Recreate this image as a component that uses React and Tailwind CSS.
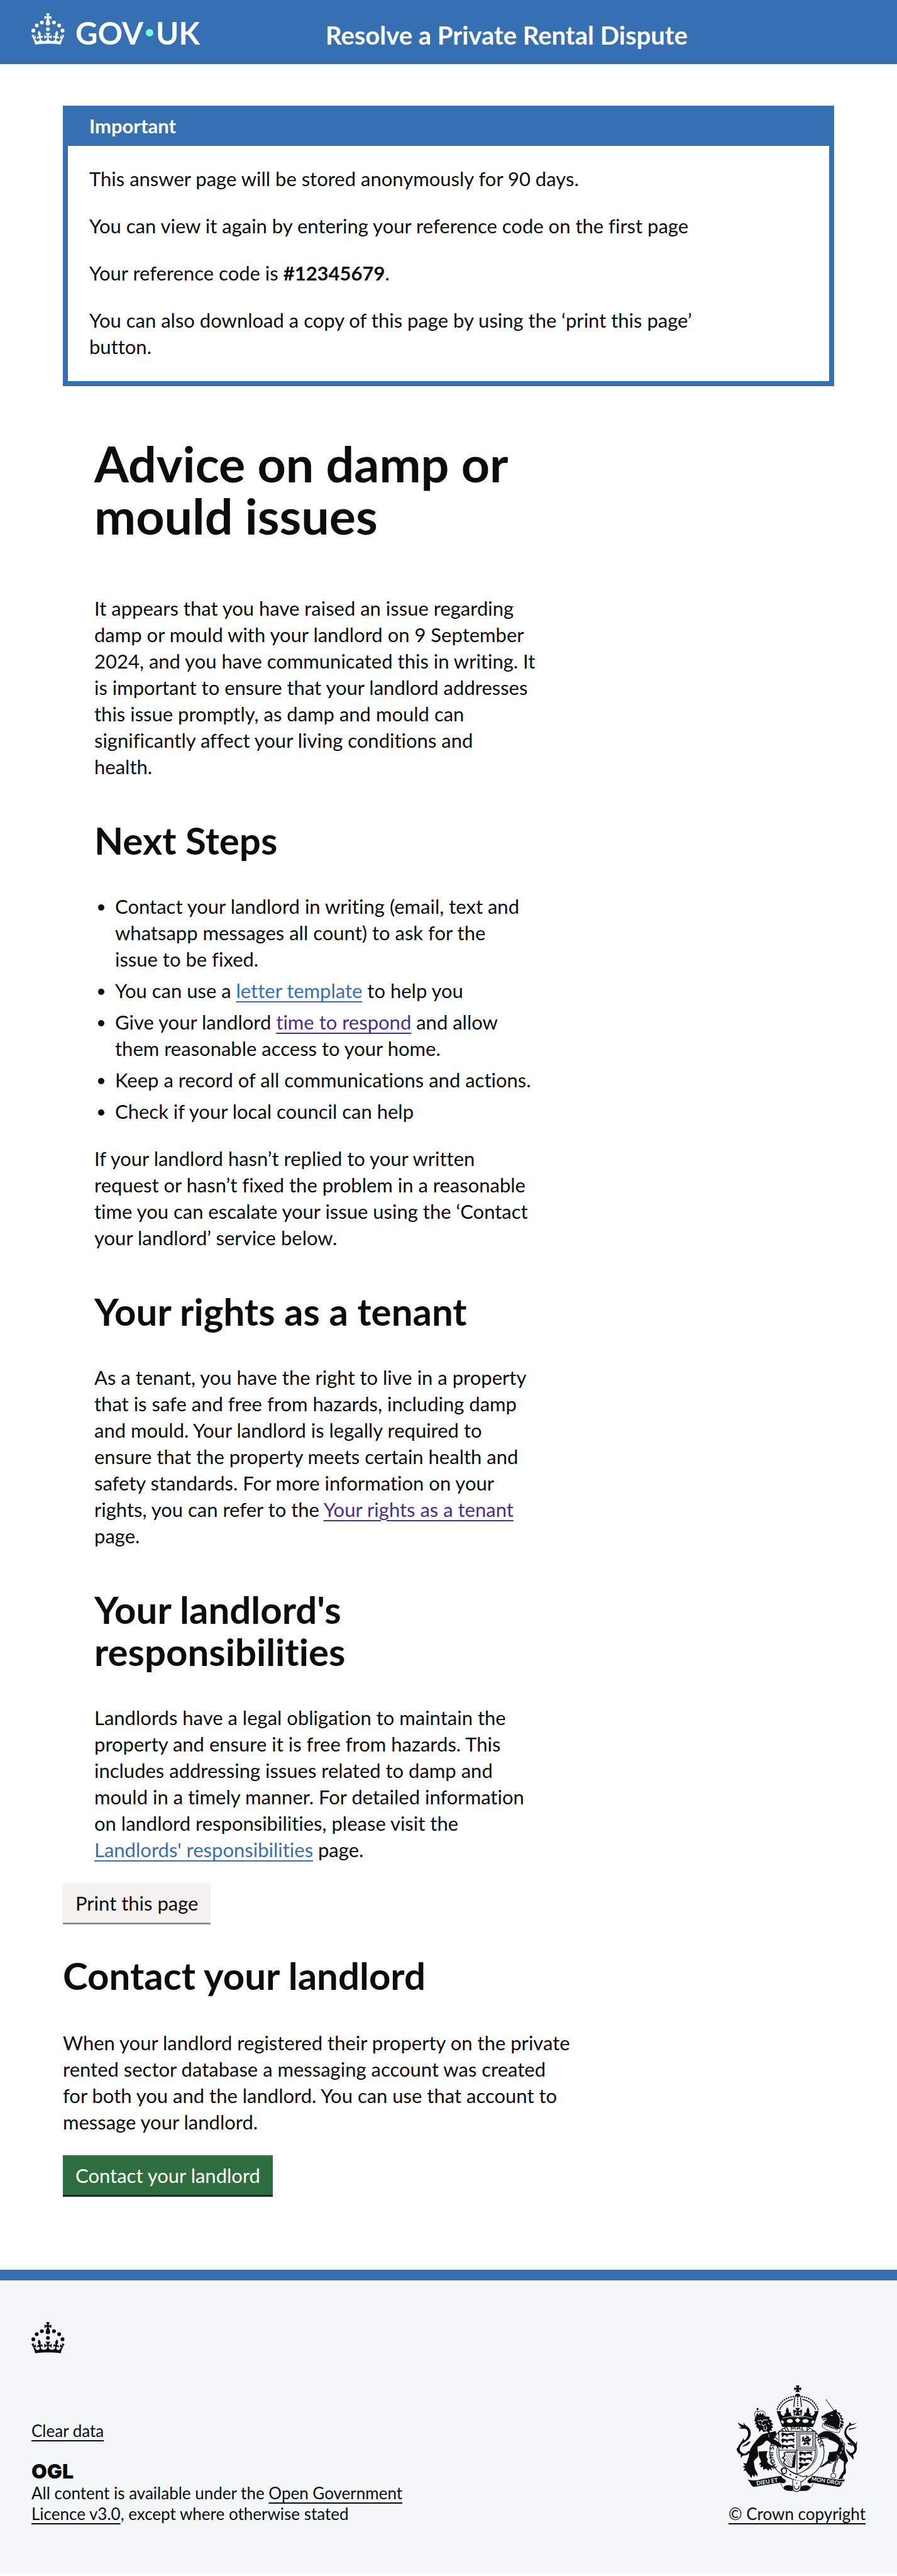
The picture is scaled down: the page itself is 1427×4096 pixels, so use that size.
import React from "react";

const linkBase = "underline decoration-2 underline-offset-[5px]";
const bodyText = "text-[31px] leading-[42px]";
const heading = "text-[60px] leading-[67px] font-bold";

function Crown({ className }) {
  return (
    <svg viewBox="0 0 64 60" className={className} fill="currentColor" aria-hidden="true">
      <circle cx="20" cy="17.6" r="3.7" />
      <circle cx="10.2" cy="23.5" r="3.7" />
      <circle cx="3.7" cy="33.2" r="3.7" />
      <circle cx="31.7" cy="30.6" r="3.7" />
      <circle cx="43.3" cy="17.6" r="3.7" />
      <circle cx="53.2" cy="23.5" r="3.7" />
      <circle cx="59.7" cy="33.2" r="3.7" />
      <path d="M33.1,9.8c.2-.1.3-.3.5-.5l4.6,2.4v-6.8l-4.6,1.5c-.1-.2-.3-.3-.5-.5l1.9-5.9h-6.7l1.9,5.9c-.2.1-.3.3-.5.5l-4.6-1.5v6.8l4.6-2.4c.1.2.3.3.5.5l-2.6,8c-.9,2.8,1.2,5.7,4.1,5.7h0c3,0,5.1-2.9,4.1-5.7l-2.6-8ZM37,37.9s-3.4,3.8-4.1,6.1c2.2,0,4.2-.5,6.4-2.8l-.7,8.5c-2-2.8-4.4-4.1-5.7-3.8.1,3.1.5,6.7,5.8,7.2,3.7.3,6.7-1.5,7-3.8.4-2.6-2-4.3-3.7-1.6-1.4-4.5,2.4-6.1,4.9-3.2-1.9-4.5-1.8-7.7,2.4-10.9,3,4,2.6,7.3-1.2,11.1,2.4-1.3,6.2,0,4,4.6-1.2-2.8-3.7-2.2-4.2.2-.3,1.7.7,3.7,3,4.2,1.9.3,4.7-.9,7-5.9-1.3,0-2.4.7-3.9,1.7l2.4-8c.6,2.3,1.4,3.7,2.2,4.5.6-1.6.5-2.8,0-5.3l5,1.8c-2.6,3.6-5.2,8.7-7.3,17.5-7.4-1.1-15.7-1.7-24.5-1.7h0c-8.8,0-17.1.6-24.5,1.7-2.1-8.9-4.7-13.9-7.3-17.5l5-1.8c-.5,2.5-.6,3.7,0,5.3.8-.8,1.6-2.3,2.2-4.5l2.4,8c-1.5-1-2.6-1.7-3.9-1.7,2.3,5,5.2,6.2,7,5.9,2.3-.4,3.3-2.4,3-4.2-.5-2.4-3-3.1-4.2-.2-2.2-4.6,1.6-6,4-4.6-3.7-3.7-4.2-7.1-1.2-11.1,4.2,3.2,4.3,6.4,2.4,10.9,2.5-2.8,6.3-1.3,4.9,3.2-1.8-2.7-4.1-1-3.7,1.6.3,2.3,3.3,4.1,7,3.8,5.4-.5,5.7-4.2,5.8-7.2-1.3-.2-3.7,1-5.7,3.8l-.7-8.5c2.2,2.3,4.2,2.7,6.4,2.8-.7-2.3-4.1-6.1-4.1-6.1h10.6Z" />
    </svg>
  );
}

/* Half of the large crown above the shield; drawn twice, mirrored about x = 466. */
function CrownHalf() {
  return (
    <g>
      <path d="M441 146C400 150 362 176 348 222" fill="none" stroke="#0b0c0c" strokeWidth="9" strokeLinecap="round" strokeDasharray="0.1 13.5" />
      <path d="M440 162C402 167 374 192 362 222" fill="none" stroke="#0b0c0c" strokeWidth="5" />
      <path d="M450 148L444 206" stroke="#0b0c0c" strokeWidth="5" />
      <path d="M345 228L372 230C366 236 367 246 378 254C388 260 396 250 390 240C396 246 402 240 398 234C398 222 402 214 406 206C412 216 417 222 414 234C418 240 426 240 428 234C424 250 432 262 446 256L456 246L440 236L446 258L466 262V320H378L366 292Z" />
      <path d="M368 288L378 280L388 292L380 304Z" fill="#f4f8fb" />
      <ellipse cx="421" cy="286" rx="18" ry="11" fill="#f4f8fb" />
      <path d="M380 270Q420 256 466 262" fill="none" stroke="#f4f8fb" strokeWidth="3" />
    </g>
  );
}

function Guardant({ y, x }) {
  return (
    <g transform={`translate(${x} ${y})`}>
      <circle cx="12" cy="9" r="7" />
      <path d="M14 8C26 0 34 12 48 7C58 2 66 6 78 3L82 8L72 13L82 20L74 24L64 15C54 18 48 14 40 18L44 26L32 25L30 17L18 19L14 28L6 26L9 18L0 16Z" />
    </g>
  );
}

function CoatOfArms({ className }) {
  const paper = "#f4f8fb";
  return (
    <svg viewBox="113 78 699 618" className={className} fill="#0b0c0c" role="img" aria-label="Royal coat of arms">
      <defs>
        <path id="garter-path" d="M354 556A137 137 0 1 1 575 552" />
      </defs>

      {/* scroll ends behind the shield */}
      <path d="M368 640C376 664 384 684 420 686H500C540 686 546 664 556 644" fill="none" stroke="#0b0c0c" strokeWidth="3" />
      <path d="M386 664C396 652 424 652 442 662L438 686H410C394 684 384 676 386 664Z" />
      <path d="M540 664C524 652 500 654 484 664L480 686H510C528 686 538 676 540 664Z" />

      {/* lion tail */}
      <path d="M123 292C134 306 150 308 166 312C190 320 204 348 192 378C182 402 150 408 138 430C126 452 136 468 164 474L186 456L192 468L168 484C150 482 146 490 140 500L138 478C118 470 112 450 118 440C126 440 124 428 130 422C140 408 150 398 154 384L160 398C182 380 188 350 172 334C160 326 142 336 126 324L144 324C134 316 126 306 123 292Z" />
      <path d="M156 290C156 302 164 306 170 314L160 318C156 308 154 300 156 290ZM197 402C184 404 176 410 168 418L146 432C160 432 186 426 197 402Z" />

      {/* lion body */}
      <path d="M264 362L340 344L352 398L374 424L372 440L360 428L358 444L346 430L320 420L292 398L280 402C270 420 250 430 236 432C232 450 244 470 238 488C234 500 214 508 214 522L220 560L236 590L234 606L222 592L216 608L206 594L200 616L188 596C180 590 172 580 168 570L154 572L164 556L150 550L164 542L152 528L172 530L182 500C190 482 184 460 198 440C210 420 240 380 264 362Z" />
      <path d="M236 462L292 458C288 480 282 492 296 506L290 518C300 534 314 542 330 548L324 558L314 552L318 572L304 560L298 572L284 560L268 566L266 548L252 552L254 536L242 534L256 522C252 500 240 490 236 462Z" />
      <path d="M238 432C232 452 246 474 240 494M300 362C296 384 316 408 350 420" fill="none" stroke={paper} strokeWidth="3" />

      {/* lion head */}
      <path d="M216 284L228 262L248 268L286 260L306 262L302 276L318 284L312 294L326 304L316 312L326 324L314 328L320 342L306 340L304 360L288 344L270 350L258 334L246 350L240 328L228 322L230 306L220 304L226 292Z" />
      <path d="M234 286L256 282L262 292L270 280L294 280M258 300L266 314L284 306M272 318L274 336Q282 342 288 330L286 316M240 296L252 310M296 294L302 306" fill="none" stroke={paper} strokeWidth="4" />
      <path d="M218 246C224 224 240 228 238 236C248 224 276 226 280 244L276 266L224 272ZM236 212V228M229 219H243" fill="none" stroke="#0b0c0c" strokeWidth="4" strokeDasharray="5 2" />
      <path d="M222 262Q250 250 278 256V264Q250 262 224 274ZM228 250L236 240L242 252L250 238L258 250L268 240L272 252V258L228 262Z" />
      <circle cx="236" cy="216" r="5" />

      {/* unicorn tail */}
      <path d="M809 292C798 306 784 308 768 314C748 324 738 348 752 368C766 386 790 402 804 424C812 448 802 470 784 480C788 490 788 498 786 508C776 498 776 490 762 482L748 460L742 446C752 452 760 466 772 470C790 466 798 450 788 432C774 412 744 390 736 368C730 338 744 318 760 308L764 292L776 304C790 302 800 300 809 292ZM808 318C794 336 776 328 758 340L764 328C782 326 796 326 808 318ZM808 400L806 426L796 430C800 418 802 410 808 400ZM782 432C770 422 758 424 752 412C764 410 778 416 782 432Z" />

      {/* unicorn body */}
      <path d="M574 384C584 362 604 346 632 344C664 346 696 368 716 392C728 412 742 432 736 452C740 476 752 492 756 514L744 532C736 550 748 566 742 588L728 600L724 618L700 620L714 596L730 572L732 520C716 506 700 498 694 478L690 510L668 522L650 520L664 530L640 530L612 548L596 554L600 544L622 528L640 512C634 494 652 478 646 464L690 460C696 450 700 436 702 426C686 402 660 400 636 388C620 386 600 384 588 398L586 424L574 440L578 456L566 446V408Z" />
      <path d="M580 430L592 450L584 466L572 452Z" />
      <path d="M646 460C668 470 690 450 698 430M584 396C600 374 624 380 644 388" fill="none" stroke={paper} strokeWidth="3" />

      {/* unicorn head and mane */}
      <path d="M628 162L678 230" stroke="#0b0c0c" strokeWidth="4" strokeDasharray="7 2" />
      <path d="M602 260L618 252C628 242 638 240 650 236L672 226L688 218L692 234L712 240L708 250L722 256L716 264L730 276L722 282L734 296L722 300L732 312L720 314L726 328L708 322L712 340L690 330L670 318L640 308L618 300L622 286L636 280L626 278L608 284L616 272L604 272Z" />
      <path d="M610 270L634 272M656 252L668 256M690 240C714 262 716 290 704 322M700 250L712 262M708 272L722 284M708 292L722 302" fill="none" stroke={paper} strokeWidth="4" />
      <path d="M612 298Q652 332 712 330L706 352Q648 354 606 318Z" fill={paper} stroke="#0b0c0c" strokeWidth="3" />
      <path d="M618 306L696 336" stroke="#0b0c0c" strokeWidth="11" strokeDasharray="5 6" />

      {/* chain */}
      <path d="M712 392L732 420L722 452L702 492L684 524L674 556L671 582" fill="none" stroke="#0b0c0c" strokeWidth="14" strokeLinecap="round" strokeDasharray="12 15" />
      <path d="M712 392L732 420L722 452L702 492L684 524L674 556L671 582" fill="none" stroke={paper} strokeWidth="7" strokeLinecap="round" strokeDasharray="12 15" />
      <path d="M712 392L732 420L722 452L702 492L684 524L674 556L671 582" fill="none" stroke="#0b0c0c" strokeWidth="3" />
      <circle cx="671" cy="600" r="14" fill="none" stroke="#0b0c0c" strokeWidth="4" />

      {/* garter */}
      <circle cx="462" cy="464" r="156" fill={paper} stroke="#0b0c0c" strokeWidth="4" />
      <circle cx="462" cy="464" r="116" fill="none" stroke="#0b0c0c" strokeWidth="3" />
      <text fontFamily="Lato" fontSize="35" fontWeight="700">
        <textPath href="#garter-path" startOffset="1%">HONI SOIT QUI MAL Y PENSE</textPath>
      </text>

      {/* shield */}
      <path d="M358 346H568V470C568 530 516 574 462 592C410 574 358 530 358 470Z" fill={paper} stroke="#0b0c0c" strokeWidth="4" />
      <path d="M462 346V592M358 454H568" stroke="#0b0c0c" strokeWidth="4" />
      <Guardant x={368} y={350} />
      <Guardant x={368} y={384} />
      <Guardant x={368} y={418} />
      <rect x="471" y="354" width="88" height="90" fill="none" stroke="#0b0c0c" strokeWidth="3" />
      <rect x="479" y="362" width="72" height="74" fill="none" stroke="#0b0c0c" strokeWidth="3" />
      <path d="M490 382L500 374L506 386L518 378L512 368L530 376L534 390L544 384L538 402L526 404L536 416L528 428L518 414L506 424L494 420L506 410L500 400L488 406L494 394Z" />
      <path d="M498 382L510 396L528 388M506 410L522 404" fill="none" stroke={paper} strokeWidth="3" />
      <path d="M388 470C410 456 430 472 454 462L450 484C440 500 446 530 434 552C410 552 396 540 384 526L394 508L378 498L392 488Z" fill="none" stroke="#0b0c0c" strokeWidth="6" />
      <path d="M398 478L438 546M408 474L444 530M420 474L444 512M398 496L428 546M400 514L416 542M432 474L446 496" stroke="#0b0c0c" strokeWidth="2" />
      <path d="M442 484L456 482L450 556L432 552Z" />
      <Guardant x={470} y={458} />
      <Guardant x={470} y={492} />
      <path d="M472 530L482 524L498 532L520 526L536 530L516 544L500 542L488 556L476 566L470 556L480 546Z" />

      {/* lion paw resting on the shield */}
      <path d="M300 378L340 396L372 420L370 442L358 430L352 440L342 428L316 418Z" />

      {/* buckled strap */}
      <path d="M370 566C380 546 410 556 422 574C446 592 470 594 494 606L520 600L512 618L490 634C450 628 410 612 380 594Z" fill={paper} stroke="#0b0c0c" strokeWidth="4" />
      <ellipse cx="388" cy="573" rx="14" ry="16" fill="none" stroke="#0b0c0c" strokeWidth="6" />
      <circle cx="424" cy="594" r="5" />
      <circle cx="458" cy="609" r="5" />
      <path d="M438 624V660C436 684 448 692 460 692C474 692 486 682 484 658V632" fill={paper} stroke="#0b0c0c" strokeWidth="4" />
      <path d="M446 658C446 686 474 686 474 658" fill="none" stroke="#0b0c0c" strokeWidth="5" />
      <circle cx="460" cy="644" r="4" />

      {/* motto scroll */}
      <path d="M178 622Q220 634 260 620L372 600C376 622 398 614 398 634C388 650 380 642 366 640L214 664C200 660 196 646 190 636Z" />
      <path d="M738 622Q700 626 664 618L546 600C548 618 524 616 522 634C528 650 540 642 552 640L702 664C716 660 724 644 730 636Z" />
      <text transform="translate(230 656) rotate(-9)" fontFamily="Lato" fontSize="33" fontWeight="700" fill={paper}>DIEU ET</text>
      <text transform="translate(544 628) rotate(9)" fontFamily="Lato" fontSize="32" fontWeight="700" fill={paper}>MON DROIT</text>

      {/* crown */}
      <path d="M460 98L456 82H476L472 98L486 92V110L472 104L478 120H454L460 104L446 110V92Z" />
      <path d="M449 146A17 17 0 1 1 483 146Z" />
      <path d="M466 150V208" stroke="#0b0c0c" strokeWidth="8" strokeLinecap="round" strokeDasharray="0.1 12" />
      <CrownHalf />
      <g transform="translate(932 0) scale(-1 1)">
        <CrownHalf />
      </g>
      <path d="M466 268L482 282L466 296L450 282Z" fill={paper} />
      <path d="M462 228L450 210H482L470 228L492 218V244L472 234L482 256H450L460 234L440 244V218Z" stroke={paper} strokeWidth="2" />
    </svg>
  );
}

function Header() {
  return (
    <header className="flex h-[102px] items-start bg-[#3670b2] px-[50px] text-white">
      <a href="#home" aria-label="GOV.UK" className="flex w-[468px] shrink-0 items-start pt-[21px]">
        <Crown className="h-[50px] w-[53px]" />
        <span className="ml-[17px] flex items-center text-[49px] leading-[62px] font-bold">
          GOV
          <span className="mx-1 size-3 rounded-full bg-[#76fde1]" />
          UK
        </span>
      </a>
      <a href="#service" className="pt-[30px] text-[40px] leading-[52px] font-bold">
        Resolve a Private Rental Dispute
      </a>
    </header>
  );
}

function NotificationBanner() {
  return (
    <section aria-labelledby="banner-title" className="border-8 border-t-0 border-[#3670b2]">
      <div className="bg-[#3670b2] px-[34px] py-[11px]">
        <h2 id="banner-title" className="text-[31px] leading-[42px] font-bold text-white">Important</h2>
      </div>
      <div className={`px-[34px] pt-[31px] pb-[34px] ${bodyText}`}>
        <div className="flex max-w-[1007px] flex-col gap-[33px]">
          <p>This answer page will be stored anonymously for 90 days.</p>
          <p>You can view it again by entering your reference code on the first page</p>
          <p>
            Your reference code is <strong className="font-bold">#12345679</strong>.
          </p>
          <p>You can also download a copy of this page by using the ‘print this page’ button.</p>
        </div>
      </div>
    </section>
  );
}

function Advice() {
  return (
    <article className="pt-[81px] pl-[50px]">
      <div className={`max-w-[710px] ${bodyText}`}>
        <h1 className="mb-[85px] text-[79px] leading-[83px] font-bold">Advice on damp or mould issues</h1>
        <p>
          It appears that you have raised an issue regarding damp or mould with your landlord on 9 September 2024, and
          you have communicated this in writing. It is important to ensure that your landlord addresses this issue
          promptly, as damp and mould can significantly affect your living conditions and{" "}
          <br className="max-lg:hidden" />
          health.
        </p>

        <h2 className={`mt-[63px] mb-[50px] ${heading}`}>Next Steps</h2>
        <ul className="list-disc space-y-2 pl-[33px]">
          <li>
            Contact your landlord in writing (email, text and whatsapp messages all count) to ask for the{" "}
            <br className="max-lg:hidden" />
            issue to be fixed.
          </li>
          <li>
            You can use a{" "}
            <a href="#letter" className={`text-[#3670b2] ${linkBase}`}>letter template</a> to help you
          </li>
          <li>
            Give your landlord{" "}
            <a href="#time" className={`text-[#4c2c92] ${linkBase}`}>time to respond</a> and allow them reasonable access
            to your home.
          </li>
          <li>Keep a record of all communications and actions.</li>
          <li>Check if your local council can help</li>
        </ul>
        <p className="mt-[33px]">
          If your landlord hasn’t replied to your written request or hasn’t fixed the problem in a reasonable time you
          can escalate your issue using the ‘Contact your landlord’ service below.
        </p>

        <h2 className={`mt-[63px] mb-[50px] ${heading}`}>Your rights as a tenant</h2>
        <p>
          As a tenant, you have the right to live in a property that is safe and free from hazards, including damp and
          mould. Your landlord is legally required to ensure that the property meets certain health and safety
          standards. For more information on your rights, you can refer to the{" "}
          <a href="#rights" className={`text-[#4c2c92] ${linkBase}`}>Your rights as a tenant</a> page.
        </p>

        <h2 className={`mt-[63px] mb-[50px] ${heading}`}>Your landlord's responsibilities</h2>
        <p>
          Landlords have a legal obligation to maintain the property and ensure it is free from hazards. This includes
          addressing issues related to damp and mould in a timely manner. For detailed information on landlord
          responsibilities, please visit the{" "}
          <a href="#responsibilities" className={`text-[#3670b2] ${linkBase}`}>Landlords' responsibilities</a> page.
        </p>
      </div>
    </article>
  );
}

function Contact() {
  return (
    <section className="max-w-[818px] pt-[32px]">
      <button
        type="button"
        className="block h-[63px] bg-[#f3f2f1] px-5 text-[31px] leading-[42px] shadow-[0_3px_0_#929191]"
      >
        Print this page
      </button>
      <h2 className={`mt-[51px] mb-[52px] ${heading}`}>Contact your landlord</h2>
      <p className={bodyText}>
        When your landlord registered their property on the private rented sector database a messaging account was
        created{" "}
        <br className="max-lg:hidden" />
        for both you and the landlord. You can use that account to{" "}
        <br className="max-lg:hidden" />
        message your landlord.
      </p>
      <button
        type="button"
        className="mt-[32px] block h-[63px] bg-[#2f6e41] px-5 text-[31px] leading-[42px] text-white shadow-[0_3px_0_#0f2e1b]"
      >
        Contact your landlord
      </button>
    </section>
  );
}

function Footer() {
  return (
    <footer className="border-t-[17px] border-[#3670b2] bg-[#f4f8fb] px-[50px] pt-[66px] pb-[79px] text-[26px] leading-[33px]">
      <Crown className="h-[50px] w-[53px]" />
      <div className="mt-[50px] flex items-end justify-between">
        <div>
          <a href="#clear" className={linkBase}>Clear data</a>
          <p aria-label="Open Government Licence" className="mt-[32px] mb-[2px] font-['Inter',sans-serif] text-[32px] leading-[32px] font-black">
            OGL
          </p>
          <p className="max-w-[640px]">
            All content is available under the{" "}
            <a href="#licence" className={linkBase}>Open Government Licence v3.0</a>, except where otherwise stated
          </p>
        </div>
        <a href="#copyright" className={`flex flex-col items-center gap-[18px] ${linkBase}`}>
          <CoatOfArms className="h-[171px] w-[194px]" />
          <span>© Crown copyright</span>
        </a>
      </div>
    </footer>
  );
}

export default function App() {
  return (
    <div className="bg-white font-['Lato',sans-serif] text-[#0b0c0c] [font-variant-ligatures:none]">
      <Header />
      <main className="px-[100px] pt-[66px] pb-[119px]">
        <NotificationBanner />
        <Advice />
        <Contact />
      </main>
      <Footer />
    </div>
  );
}
